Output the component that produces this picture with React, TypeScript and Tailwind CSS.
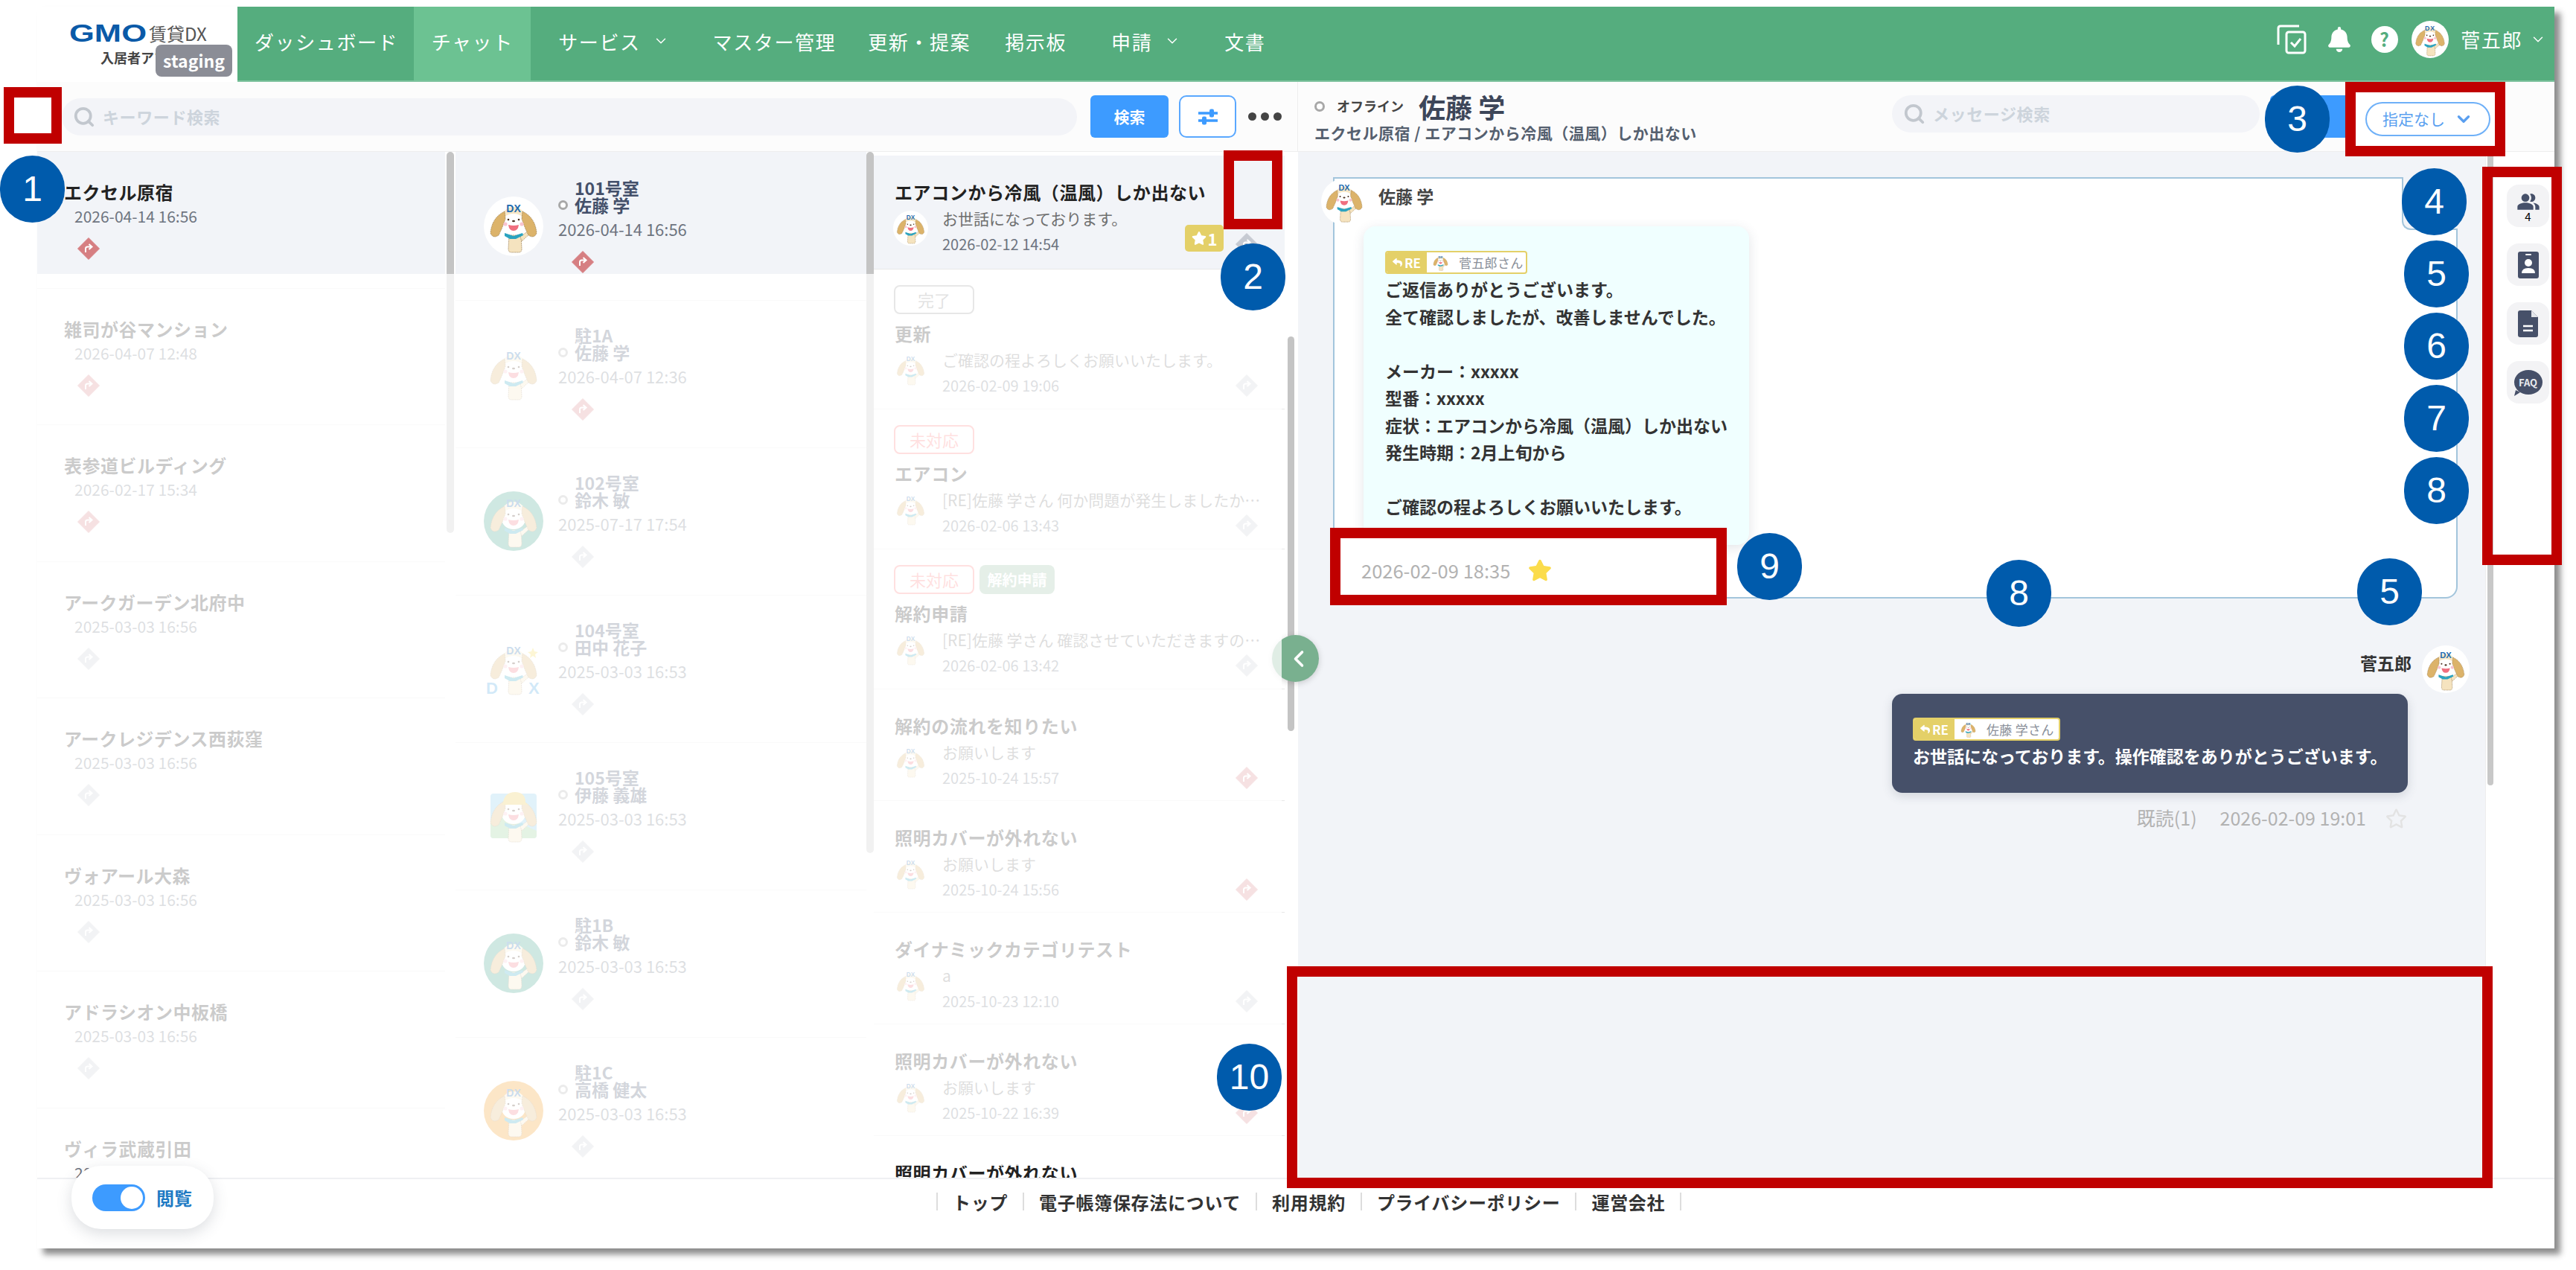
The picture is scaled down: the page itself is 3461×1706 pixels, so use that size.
import { ChevronDown, ChevronLeft, Search } from "lucide-react";
import { FaBell, FaReply, FaStar, FaRegStar } from "react-icons/fa";
import { MdPeopleAlt } from "react-icons/md";

const PROPERTIES = [
  { name: "エクセル原宿", date: "2026-04-14 16:56", hot: true, selected: true },
  { name: "雑司が谷マンション", date: "2026-04-07 12:48", hot: true },
  { name: "表参道ビルディング", date: "2026-02-17 15:34", hot: true },
  { name: "アークガーデン北府中", date: "2025-03-03 16:56" },
  { name: "アークレジデンス西荻窪", date: "2025-03-03 16:56" },
  { name: "ヴォアール大森", date: "2025-03-03 16:56" },
  { name: "アドラシオン中板橋", date: "2025-03-03 16:56" },
  { name: "ヴィラ武蔵引田", date: "2025-03-03 16:56" },
];

type Scene = "plain" | "stars" | "hill";

const ROOMS: { room: string; person: string; date: string; hot?: boolean; selected?: boolean; tone: string; scene?: Scene }[] = [
  { room: "101号室", person: "佐藤 学", date: "2026-04-14 16:56", hot: true, selected: true, tone: "#ffffff" },
  { room: "駐1A", person: "佐藤 学", date: "2026-04-07 12:36", hot: true, tone: "#ffffff" },
  { room: "102号室", person: "鈴木 敏", date: "2025-07-17 17:54", tone: "#339b81" },
  { room: "104号室", person: "田中 花子", date: "2025-03-03 16:53", tone: "#ffffff", scene: "stars" },
  { room: "105号室", person: "伊藤 義雄", date: "2025-03-03 16:53", tone: "#ffffff", scene: "hill" },
  { room: "駐1B", person: "鈴木 敏", date: "2025-03-03 16:53", tone: "#339b81" },
  { room: "駐1C", person: "高橋 健太", date: "2025-03-03 16:53", tone: "#f29210" },
];

const TICKETS: { title: string; text: string; date: string; status?: string; tag?: string; hot?: boolean; selected?: boolean; star?: boolean }[] = [
  { title: "エアコンから冷風（温風）しか出ない", text: "お世話になっております。", date: "2026-02-12 14:54", selected: true, star: true },
  { title: "更新", text: "ご確認の程よろしくお願いいたします。", date: "2026-02-09 19:06", status: "完了" },
  { title: "エアコン", text: "[RE]佐藤 学さん 何か問題が発生しましたか…", date: "2026-02-06 13:43", status: "未対応" },
  { title: "解約申請", text: "[RE]佐藤 学さん 確認させていただきますの…", date: "2026-02-06 13:42", status: "未対応", tag: "解約申請" },
  { title: "解約の流れを知りたい", text: "お願いします", date: "2025-10-24 15:57", hot: true },
  { title: "照明カバーが外れない", text: "お願いします", date: "2025-10-24 15:56", hot: true },
  { title: "ダイナミックカテゴリテスト", text: "a", date: "2025-10-23 12:10" },
  { title: "照明カバーが外れない", text: "お願いします", date: "2025-10-22 16:39", hot: true },
  { title: "照明カバーが外れない", text: "お願いします", date: "2025-10-21 16:39" },
];

const NUMBER_BADGES = [
  { label: "1", place: "left-0 top-[209px]" },
  { label: "2", place: "left-[1640px] top-[327px]" },
  { label: "3", place: "left-[3043px] top-[115px]" },
  { label: "4", place: "left-[3227px] top-[226px]" },
  { label: "5", place: "left-[3230px] top-[323px]" },
  { label: "6", place: "left-[3230px] top-[420px]" },
  { label: "7", place: "left-[3230px] top-[517px]" },
  { label: "8", place: "left-[3230px] top-[614px]" },
  { label: "9", place: "left-[2334px] top-[716px]" },
  { label: "8", place: "left-[2669px] top-[752px]" },
  { label: "5", place: "left-[3167px] top-[750px]" },
  { label: "10", place: "left-[1635px] top-[1402px]" },
];

const FOOTER_LINKS = ["トップ", "電子帳簿保存法について", "利用規約", "プライバシーポリシー", "運営会社"];

function Mascot({ className, tone = "#ffffff", scene = "plain" }: { className: string; tone?: string; scene?: Scene }) {
  return (
    <svg aria-hidden="true" className={className} viewBox="0 0 80 80">
      <circle cx="40" cy="40" fill={tone} r="40" />
      {scene === "hill" ? (
        <g>
          <rect fill="#7cc8e8" height="60" rx="4" width="62" x="9" y="10" />
          <path d="M9 50 L26 20 L44 48 L71 60 L71 66 Q71 70 67 70 L13 70 Q9 70 9 66Z" fill="#8cc98a" />
        </g>
      ) : null}
      <path d="M34 52 L50 52 L51 70 Q51 75 47 75 L37 75 Q33 75 33 70Z" fill="#f5e3bf" stroke="#8a6a3a" strokeDasharray="1.6 1" strokeWidth="0.7" />
      <path d="M49 54 L60 46 L63 49 L51 60Z" fill="#f5e3bf" stroke="#8a6a3a" strokeDasharray="1.6 1" strokeWidth="0.6" />
      <ellipse cx="40" cy="32" fill="#f7e7c6" rx="17" ry="18" />
      <ellipse cx="40" cy="37" fill="#ffffff" rx="16" ry="14" />
      <path d="M28 20 Q11 28 9 49 Q12 57 20 52 Q25 42 29 30Z" fill="#dcb36a" stroke="#8a6a3a" strokeDasharray="1.6 1" strokeWidth="0.7" />
      <path d="M52 20 Q69 28 71 49 Q68 57 60 52 Q55 42 51 30Z" fill="#dcb36a" stroke="#8a6a3a" strokeDasharray="1.6 1" strokeWidth="0.7" />
      <circle cx="29" cy="37" fill="#f8c4d0" r="2.6" />
      <circle cx="51" cy="37" fill="#f8c4d0" r="2.6" />
      <circle cx="33" cy="31" fill="#4a2f1f" r="1.3" />
      <circle cx="47" cy="31" fill="#4a2f1f" r="1.3" />
      <ellipse cx="40" cy="33" fill="#4a2f1f" rx="2" ry="1.3" />
      <path d="M33 38 Q40 40 47 38 Q46 46 40 46 Q34 46 33 38Z" fill="#f06f7f" />
      <path d="M28 49 L40 53 L52 49 L53 52 L43 57 L35 57 L28 53Z" fill="#2ba3c0" />
      {scene === "hill" ? (
        <path d="M26 22 Q28 8 42 8 Q56 8 56 22 L60 25 L24 25Z" fill="#e8c33c" />
      ) : (
        <text fill="#1f6cb0" fontFamily="Liberation Sans, sans-serif" fontSize="14" fontWeight="700" textAnchor="middle" x="40" y="21">
          DX
        </text>
      )}
      {scene === "stars" ? (
        <g fontFamily="Liberation Sans, sans-serif" fontWeight="700">
          <text fill="#3f9fe0" fontSize="22" x="3" y="74">D</text>
          <text fill="#3f9fe0" fontSize="22" x="60" y="74">X</text>
          <path d="M66 12 L68 17 L73 18 L69 21 L70 26 L66 23 L62 26 L63 21 L59 18 L64 17Z" fill="#f5d94a" />
        </g>
      ) : null}
    </svg>
  );
}

function Diamond({ hot }: { hot?: boolean }) {
  return (
    <svg aria-hidden="true" className="block h-[30px] w-[30px] shrink-0" viewBox="0 0 30 30">
      <path d="M15 0.5 L29.5 15 L15 29.5 L0.5 15Z" fill={hot ? "#d67f82" : "#c6cad2"} stroke={hot ? "#d67f82" : "#c6cad2"} strokeLinejoin="round" />
      <path d="M11 20 L11 15 Q11 12.5 13.5 12.5 L18.5 12.5 M15.5 9 L19.5 12.5 L15.5 16" fill="none" stroke="#ffffff" strokeWidth="2" />
    </svg>
  );
}

function NavChevron() {
  return <ChevronDown aria-hidden="true" className="ml-[16px] size-[22px] text-white" strokeWidth={1.6} />;
}

function Header() {
  return (
    <header className="flex h-[101px] shrink-0">
      <div className="relative w-[269px] shrink-0 bg-white pl-[42px] pt-[22px]">
        <div className="flex items-center">
          <svg className="h-[26px] w-[106px]" viewBox="0 0 106 26">
            <text
              fill="#0a5aa8"
              fontFamily="Liberation Sans, sans-serif"
              fontSize="33"
              fontWeight="700"
              lengthAdjust="spacingAndGlyphs"
              textLength="104"
              x="1"
              y="24"
            >
              GMO
            </text>
          </svg>
          <span className="ml-[2px] text-[24px] leading-[28px] text-[#555555]">賃貸DX</span>
        </div>
        <p className="ml-[43px] mt-[6px] whitespace-nowrap text-[18px] font-bold leading-[24px] text-[#444444]">入居者アプリ</p>
        <span className="absolute left-[159px] top-[51px] flex h-[43px] w-[103px] items-center justify-center rounded-[8px] bg-[#8b8d96] text-[23px] font-bold text-white">
          staging
        </span>
      </div>
      <nav className="flex flex-1 items-stretch border-b-2 border-[#7fc29f] bg-[#55ad7e] pr-[11px] text-[26px] tracking-[1.6px] text-white">
        <a className="ml-[23px] flex h-[92px] items-center">ダッシュボード</a>
        <a className="ml-[21px] flex w-[157px] items-center justify-center bg-[#6cc292] pb-[7px]">チャット</a>
        <a className="ml-[37px] flex h-[92px] items-center">
          サービス
          <NavChevron />
        </a>
        <a className="ml-[59px] flex h-[92px] items-center">マスター管理</a>
        <a className="ml-[43px] flex h-[92px] items-center">更新・提案</a>
        <a className="ml-[46px] flex h-[92px] items-center">掲示板</a>
        <a className="ml-[60px] flex h-[92px] items-center">
          申請
          <NavChevron />
        </a>
        <a className="ml-[59px] flex h-[92px] items-center">文書</a>
        <div className="ml-auto flex h-[91px] items-center pb-[4px]">
          <svg aria-hidden="true" className="h-[40px] w-[40px]" viewBox="0 0 40 40">
            <path d="M30 2 H5 Q2 2 2 5 V27" fill="none" stroke="#ffffff" strokeWidth="3" />
            <rect fill="none" height="28" rx="3" stroke="#ffffff" strokeWidth="3" width="25" x="13" y="10" />
            <path d="M19 24 L24 29 L32 19" fill="none" stroke="#ffffff" strokeWidth="3" />
          </svg>
          <FaBell aria-hidden="true" className="ml-[27px] size-[34px] text-white" />
          <span className="ml-[26px] flex size-[36px] items-center justify-center rounded-full bg-white text-[25px] font-bold leading-none text-[#55ad7e]">?</span>
          <Mascot className="ml-[18px] size-[50px]" />
          <span className="ml-[16px] whitespace-nowrap">菅五郎</span>
          <ChevronDown aria-hidden="true" className="ml-[10px] size-[22px]" strokeWidth={1.6} />
        </div>
      </nav>
    </header>
  );
}

function FilterIcon() {
  return (
    <svg aria-hidden="true" className="h-[26px] w-[28px]" viewBox="0 0 28 26">
      <path d="M1 8 H27 M1 18 H27" stroke="#3d9bff" strokeWidth="3.5" />
      <rect fill="#3d9bff" height="11" rx="2" width="6" x="16" y="2.5" />
      <rect fill="#3d9bff" height="11" rx="2" width="6" x="6" y="12.5" />
    </svg>
  );
}

function SearchField({ label, className }: { label: string; className: string }) {
  return (
    <div className={`flex h-[50px] items-center rounded-full bg-[#f3f4f8] pl-[15px] ${className}`}>
      <Search aria-hidden="true" className="size-[30px] text-[#c2c7ce]" strokeWidth={3} />
      <span className="ml-[10px] text-[22px] font-bold tracking-[0.6px] text-[#cdd4dc]">{label}</span>
    </div>
  );
}

function PropertyColumn() {
  return (
    <div className="flex w-[562px] shrink-0">
      <ul className="w-[548px] shrink-0">
        {PROPERTIES.map((item) => (
          <li className="h-[183.5px] border-b border-[#e8e8e8]" key={item.name}>
            <div className={`h-[164px] pl-[36px] pt-[37px] ${item.selected ? "bg-[#f2f4f8]" : ""}`}>
              <p className="text-[24px] font-bold leading-[34px] tracking-[0.5px] text-[#222222]">{item.name}</p>
              <p className="pl-[14px] text-[21px] leading-[30px] text-[#6e7480]">{item.date}</p>
              <div className="ml-[18px] mt-[14px]">
                <Diamond hot={item.hot} />
              </div>
            </div>
          </li>
        ))}
      </ul>
      <div className="ml-[2px] h-[512px] w-[10px] rounded-full bg-[#c4c4c4]" />
    </div>
  );
}

function RoomColumn() {
  return (
    <div className="flex w-[562px] shrink-0">
      <ul className="mt-[2px] w-[552px] shrink-0">
        {ROOMS.map((item) => (
          <li className="h-[200px] border-b border-[#e8e8e8]" key={item.room}>
            <div className={`-mt-[2px] flex h-[164px] pl-[38px] pt-[36px] ${item.selected ? "bg-[#f2f4f8]" : ""}`}>
              <Mascot className="mt-[24px] size-[80px] shrink-0" scene={item.scene} tone={item.tone} />
              <div className="ml-[20px]">
                <p className="pl-[22px] text-[23px] font-bold leading-[24px] text-[#44506a]">{item.room}</p>
                <div className="flex items-center">
                  <span className="size-[13px] rounded-full border-[3px] border-[#a8a8a8] bg-white" />
                  <span className="ml-[9px] text-[23px] font-bold leading-[23px] text-[#44506a]">{item.person}</span>
                </div>
                <p className="mt-[6px] text-[22px] leading-[28px] text-[#6e7480]">{item.date}</p>
                <div className="ml-[18px] mt-[16px]">
                  <Diamond hot={item.hot} />
                </div>
              </div>
            </div>
          </li>
        ))}
      </ul>
      <div className="h-[942px] w-[10px] rounded-full bg-[#c4c4c4]" />
    </div>
  );
}

function TicketStatus({ label }: { label: string }) {
  const tone = label === "完了" ? "border-[#999999] text-[#808080]" : "border-[#ff7878] text-[#ff7878]";
  return <span className={`flex h-[39px] w-[108px] items-center justify-center rounded-[8px] border-2 text-[22px] ${tone}`}>{label}</span>;
}

function TicketColumn() {
  return (
    <div className="flex w-[570px] shrink-0">
      <ul className="w-[552px] shrink-0 pt-[5px]">
        {TICKETS.map((item, index) => (
          <li
            className={`border-b border-[#e8e8e8] pl-[26px] pr-[36px] ${item.selected ? "h-[153px] bg-[#f2f4f8] pt-[32px]" : item.status ? "h-[188px] pt-[21px]" : "h-[150px] pt-[32px]"}`}
            key={`${item.title}-${index}`}
          >
            {item.status ? (
              <div className="mb-[9px] flex gap-[7px] pl-[1px]">
                <TicketStatus label={item.status} />
                {item.tag ? (
                  <span className="flex h-[39px] w-[101px] items-center justify-center rounded-[8px] bg-[#8eb99b] text-[20px] font-bold text-white">{item.tag}</span>
                ) : null}
              </div>
            ) : null}
            <p className="pl-[2px] text-[24px] font-bold leading-[34px] tracking-[0.6px] text-[#222222]">{item.title}</p>
            <div className="mt-[4px] flex">
              <Mascot className="mt-[4px] size-[47px] shrink-0" />
              <div className="ml-[19px] min-w-0 flex-1">
                <p className="-mr-[30px] whitespace-nowrap text-[21px] leading-[28px] text-[#6f6f6f]">{item.text}</p>
                <div className="mt-[8px] flex h-[26px] items-center justify-between">
                  <span className="text-[20px] text-[#6e7480]">{item.date}</span>
                  <div className="flex items-center">
                    {item.star ? (
                      <span className="-mt-[16px] mr-[16px] flex h-[36px] w-[52px] items-center justify-center gap-[2px] rounded-[5px] bg-[#e4d068] text-[22px] font-bold text-white">
                        <FaStar className="size-[20px]" />1
                      </span>
                    ) : null}
                    <Diamond hot={item.hot} />
                  </div>
                </div>
              </div>
            </div>
          </li>
        ))}
      </ul>
      <div className="ml-[4px] mt-[248px] h-[530px] w-[9px] rounded-full bg-[#c4c4c4]" />
    </div>
  );
}

function ReplyTag({ name, widthClass }: { name: string; widthClass: string }) {
  return (
    <div className={`flex h-[31px] items-stretch overflow-hidden rounded-[4px] border-2 border-[#e4d068] bg-white ${widthClass}`}>
      <span className="flex w-[54px] shrink-0 items-center justify-center gap-[3px] bg-[#e4d068] text-[17px] font-bold text-white">
        <FaReply className="size-[13px]" />
        RE
      </span>
      <Mascot className="ml-[6px] mt-[1px] size-[25px] shrink-0" />
      <span className="ml-[12px] whitespace-nowrap text-[17px] leading-[27px] tracking-[0.3px] text-[#8a8f99]">{name}</span>
    </div>
  );
}

function ChatPanel() {
  return (
    <section className="flex min-w-0 flex-1 flex-col">
      <div className="flex h-[94px] shrink-0 items-center border-b border-[#eeeeee] bg-[#fcfcfc] pl-[22px]">
        <div className="w-[776px]">
          <div className="flex h-[40px] items-center">
            <span className="size-[14px] rounded-full border-[3px] border-[#a8a8a8] bg-white" />
            <span className="ml-[16px] text-[18px] font-bold text-[#444444]">オフライン</span>
            <span className="ml-[20px] text-[36px] font-bold leading-[40px] text-[#3d4659]">佐藤 学</span>
          </div>
          <p className="mt-[2px] whitespace-nowrap text-[21px] font-bold leading-[26px] tracking-[0.5px] text-[#55606f]">エクセル原宿 / エアコンから冷風（温風）しか出ない</p>
        </div>
        <SearchField className="-mt-[8px] w-[494px]" label="メッセージ検索" />
        <span className="-mt-[1px] ml-[14px] h-[57px] w-[120px] rounded-[6px] bg-[#3d9bff]" />
      </div>
      <div className="flex min-h-0 flex-1">
        <div className="min-w-0 flex-1 bg-[#f2f4f8] pl-[47px] pt-[34px]">
          <article className="relative h-[566px] w-[1511px] rounded-br-[16px] border-2 border-[#a3c5dc] bg-white">
            <span className="absolute -right-[2px] -top-[2px] h-[71px] w-[75px] rounded-bl-[12px] border-b-2 border-l-2 border-[#a3c5dc] bg-[#f2f4f8]" />
            <div className="-ml-[18px] flex">
              <Mascot className="size-[62px] shrink-0" />
              <span className="ml-[15px] mt-[8px] text-[23px] font-bold leading-[30px] text-[#444444]">佐藤 学</span>
            </div>
            <div className="ml-[39px] mt-[2px] h-[428px] w-[518px] rounded-[16px] bg-[#f0ffff] pl-[29px] pt-[33px] shadow-[0_4px_16px_rgba(60,70,90,0.14)]">
              <ReplyTag name="菅五郎さん" widthClass="w-[191px]" />
              <p className="mt-[2px] whitespace-pre-line text-[23px] font-bold leading-[36.5px] text-[#333333]">
                {"ご返信ありがとうございます。\n全て確認しましたが、改善しませんでした。\n\nメーカー：xxxxx\n型番：xxxxx\n症状：エアコンから冷風（温風）しか出ない\n発生時期：2月上旬から\n\nご確認の程よろしくお願いいたします。"}
              </p>
            </div>
          </article>
          <div className="mt-[63px] flex flex-col items-end pr-[21px]">
            <div className="flex h-[65px]">
              <span className="mt-[8px] text-[23px] font-bold leading-[30px] text-[#333333]">菅五郎</span>
              <Mascot className="ml-[14px] size-[64px]" />
            </div>
            <div className="mr-[83px] h-[133px] w-[693px] rounded-[14px] bg-[#465069] pl-[28px] pt-[32px] shadow-[0_4px_14px_rgba(60,70,90,0.18)]">
              <ReplyTag name="佐藤 学さん" widthClass="w-[198px]" />
              <p className="mt-[2px] whitespace-nowrap text-[23px] font-bold leading-[36px] text-white">
                お世話になっております。操作確認をありがとうございます。
              </p>
            </div>
            <div className="mr-[84px] mt-[17px] flex h-[34px] items-center text-[25px] text-[#b2b2b2]">
              <span>既読(1)</span>
              <span className="ml-[31px]">2026-02-09 19:01</span>
              <FaRegStar aria-hidden="true" className="ml-[26px] size-[29px] text-[#e3e3e3]" />
            </div>
          </div>
        </div>
        <aside className="flex w-[93px] shrink-0 border-l border-[#eeeeee] bg-white">
          <div className="ml-[2px] h-[851px] w-[8px] rounded-full bg-[#c8c8c8]" />
          <div className="ml-[18px] mt-[44px] flex flex-col gap-[22px]">
            <button className="flex size-[57px] flex-col items-center justify-center rounded-[16px] bg-[#f3f3f5] text-[#465069]">
              <MdPeopleAlt aria-hidden="true" className="size-[32px]" />
              <span className="-mt-[4px] text-[15px] leading-[16px] text-black">4</span>
            </button>
            <button className="flex size-[57px] items-center justify-center rounded-[16px] bg-[#f3f3f5]">
              <svg aria-hidden="true" className="h-[36px] w-[28px]" viewBox="0 0 28 36">
                <rect fill="#465069" height="36" rx="3" width="28" />
                <rect fill="#ffffff" height="2" rx="1" width="8" x="10" y="3" />
                <circle cx="14" cy="15" fill="#ffffff" r="5" />
                <path d="M5 29 Q5 22 14 22 Q23 22 23 29Z" fill="#ffffff" />
              </svg>
            </button>
            <button className="flex size-[57px] items-center justify-center rounded-[16px] bg-[#f3f3f5]">
              <svg aria-hidden="true" className="h-[36px] w-[27px]" viewBox="0 0 27 36">
                <path d="M3 0 H18 L27 9 V33 Q27 36 24 36 H3 Q0 36 0 33 V3 Q0 0 3 0Z" fill="#465069" />
                <path d="M18 0 L27 9 H18Z" fill="#e3e5ea" />
                <path d="M7 21 H20 M7 27 H20" stroke="#ffffff" strokeWidth="2.6" />
              </svg>
            </button>
            <button className="relative flex size-[57px] items-center justify-center rounded-[16px] bg-[#f3f3f5]">
              <span className="flex h-[33px] w-[38px] items-center justify-center rounded-[50%] bg-[#465069] text-[13px] font-bold text-[#e8eaee]">FAQ</span>
              <svg aria-hidden="true" className="absolute bottom-[10px] left-[10px] h-[8px] w-[8px]" viewBox="0 0 8 8">
                <path d="M2 0 L0 8 L8 3Z" fill="#465069" />
              </svg>
            </button>
          </div>
        </aside>
      </div>
    </section>
  );
}

function Footer() {
  return (
    <footer className="flex h-[95px] shrink-0 items-start border-t-2 border-[#eff0f3] bg-white pl-[1208px] pt-[18px] text-[24px] font-bold leading-[26px] tracking-[0.7px] text-[#333333]">
      <span className="h-[24px] w-[2px] bg-[#dddddd]" />
      {FOOTER_LINKS.map((link) => (
        <div className="flex" key={link}>
          <a className="mx-[20px] whitespace-nowrap">{link}</a>
          <span className="h-[24px] w-[2px] bg-[#dddddd]" />
        </div>
      ))}
    </footer>
  );
}

function Annotations() {
  return (
    <>
      <div className="absolute left-[5px] top-[117px] z-30 h-[76px] w-[78px] border-[14px] border-[#c00000] bg-white" />
      <div className="absolute left-[1644px] top-[202px] z-30 h-[106px] w-[79px] border-[14px] border-[#c00000]" />
      <div className="absolute left-[3151px] top-[110px] z-30 flex h-[100px] w-[215px] items-center border-[14px] border-[#c00000] bg-white pl-[13px]">
        <button className="flex h-[46px] w-[168px] items-center justify-center gap-[12px] rounded-full border-2 border-[#6eb0f8] text-[21px] text-[#5a9ff0]">
          指定なし
          <ChevronDown aria-hidden="true" className="size-[26px]" strokeWidth={3} />
        </button>
      </div>
      <div className="absolute left-[3335px] top-[224px] z-30 h-[535px] w-[107px] border-[14px] border-[#c00000]" />
      <div className="absolute left-[1787px] top-[709px] z-30 flex h-[104px] w-[533px] items-center border-[14px] border-[#c00000] bg-white pl-[28px] pt-[10px] text-[25.5px] text-[#b2b2b2]">
        <span>2026-02-09 18:35</span>
        <FaStar aria-hidden="true" className="ml-[24px] size-[32px] text-[#fbdc4b]" />
      </div>
      <div className="absolute left-[1729px] top-[1298px] z-30 h-[298px] w-[1620px] border-[14px] border-[#c00000]" />
      {NUMBER_BADGES.map((badge) => (
        <span
          className={`absolute z-40 flex h-[90px] w-[87px] items-center justify-center rounded-full bg-[#005bac] font-['Liberation_Sans',sans-serif] text-[48px] leading-none text-white ${badge.place}`}
          key={badge.place}
        >
          {badge.label}
        </span>
      ))}
    </>
  );
}

export default function App() {
  return (
    <div className="relative h-[1706px] w-[3461px] overflow-hidden bg-white pl-[50px] pt-[9px] font-['Noto_Sans_CJK_JP','Noto_Sans',sans-serif]">
      <main className="relative flex h-[1668px] w-[3382px] flex-col bg-white shadow-[8px_8px_8px_rgba(0,0,0,0.45)]">
        <Header />
        <div className="flex min-h-0 flex-1">
          <section className="flex w-[1694px] shrink-0 flex-col">
            <div className="flex h-[94px] shrink-0 items-center border-b border-r border-[#eeeeee] bg-[#fcfcfc] pl-[33px]">
              <SearchField className="w-[1364px]" label="キーワード検索" />
              <span className="ml-[18px] flex h-[57px] w-[105px] items-center justify-center rounded-[6px] bg-[#3d9bff] text-[21px] font-bold text-white">検索</span>
              <span className="ml-[14px] flex h-[57px] w-[77px] items-center justify-center rounded-[10px] border-2 border-[#5aa8ff] bg-white">
                <FilterIcon />
              </span>
              <span className="ml-[16px] flex gap-[6px]">
                <i className="size-[11px] rounded-full bg-[#444444]" />
                <i className="size-[11px] rounded-full bg-[#444444]" />
                <i className="size-[11px] rounded-full bg-[#444444]" />
              </span>
            </div>
            <div className="flex min-h-0 flex-1 overflow-hidden">
              <PropertyColumn />
              <RoomColumn />
              <TicketColumn />
            </div>
          </section>
          <ChatPanel />
        </div>
        <Footer />
        <span className="absolute left-[1659px] top-[844px] z-10 flex size-[63px] items-center justify-center rounded-full bg-[#79b08f] pl-[8px] shadow-[0_2px_8px_rgba(0,0,0,0.18)]">
          <ChevronLeft aria-hidden="true" className="size-[36px] text-white" strokeWidth={2.4} />
        </span>
        <div className="pointer-events-none absolute left-0 top-[359px] z-20 h-[1198px] w-[1672px] bg-white/[0.77]" />
        <div className="absolute bottom-[26px] left-[46px] z-30 flex h-[85px] w-[191px] items-center rounded-[40px] bg-white pl-[28px] shadow-[0_6px_20px_rgba(60,70,90,0.18)]">
          <span className="flex h-[36px] w-[71px] items-center justify-end rounded-full bg-[#3d9bff] pr-[3px]">
            <i className="size-[30px] rounded-full bg-white" />
          </span>
          <span className="ml-[15px] text-[24px] font-bold text-[#1f7bc4]">閲覧</span>
        </div>
      </main>
      <Annotations />
    </div>
  );
}
